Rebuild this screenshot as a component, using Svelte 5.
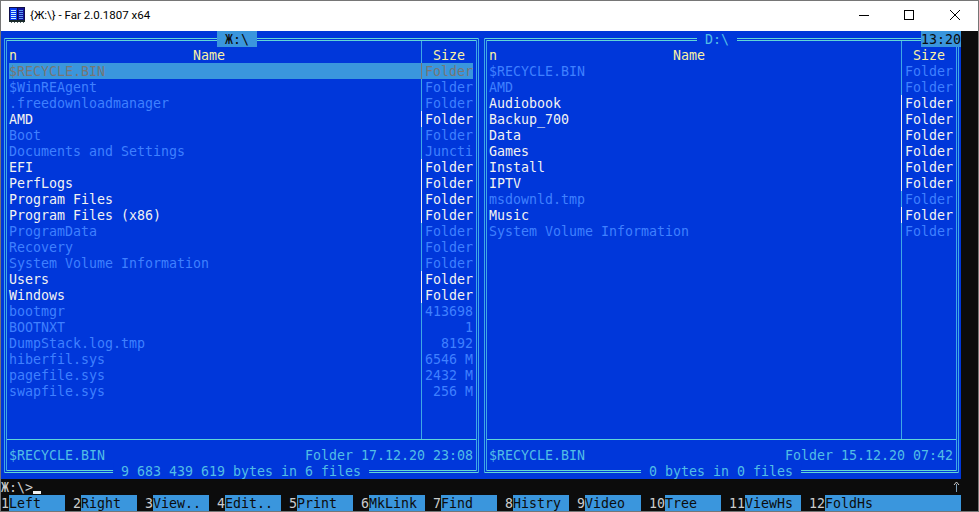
<script>
  const dim = 'dim';
  const white = 'white';

  const leftFiles = [
    { name: '$RECYCLE.BIN', size: 'Folder', kind: 'selected' },
    { name: '$WinREAgent', size: 'Folder', kind: dim },
    { name: '.freedownloadmanager', size: 'Folder', kind: dim },
    { name: 'AMD', size: 'Folder', kind: white },
    { name: 'Boot', size: 'Folder', kind: dim },
    { name: 'Documents and Settings', size: 'Juncti', kind: dim },
    { name: 'EFI', size: 'Folder', kind: white },
    { name: 'PerfLogs', size: 'Folder', kind: white },
    { name: 'Program Files', size: 'Folder', kind: white },
    { name: 'Program Files (x86)', size: 'Folder', kind: white },
    { name: 'ProgramData', size: 'Folder', kind: dim },
    { name: 'Recovery', size: 'Folder', kind: dim },
    { name: 'System Volume Information', size: 'Folder', kind: dim },
    { name: 'Users', size: 'Folder', kind: white },
    { name: 'Windows', size: 'Folder', kind: white },
    { name: 'bootmgr', size: '413698', kind: dim },
    { name: 'BOOTNXT', size: '1', kind: dim, right: true },
    { name: 'DumpStack.log.tmp', size: '8192', kind: dim, right: true },
    { name: 'hiberfil.sys', size: '6546 M', kind: dim },
    { name: 'pagefile.sys', size: '2432 M', kind: dim },
    { name: 'swapfile.sys', size: '256 M', kind: dim, right: true }
  ];

  const rightFiles = [
    { name: '$RECYCLE.BIN', size: 'Folder', kind: dim },
    { name: 'AMD', size: 'Folder', kind: dim },
    { name: 'Audiobook', size: 'Folder', kind: white },
    { name: 'Backup_700', size: 'Folder', kind: white },
    { name: 'Data', size: 'Folder', kind: white },
    { name: 'Games', size: 'Folder', kind: white },
    { name: 'Install', size: 'Folder', kind: white },
    { name: 'IPTV', size: 'Folder', kind: white },
    { name: 'msdownld.tmp', size: 'Folder', kind: dim },
    { name: 'Music', size: 'Folder', kind: white },
    { name: 'System Volume Information', size: 'Folder', kind: dim }
  ];

  const panels = [
    {
      title: ' Ж:\\ ',
      active: true,
      files: leftFiles,
      current: '$RECYCLE.BIN',
      info: 'Folder 17.12.20 23:08',
      status: ' 9 683 439 619 bytes in 6 files '
    },
    {
      title: ' D:\\ ',
      active: false,
      files: rightFiles,
      current: '$RECYCLE.BIN',
      info: 'Folder 15.12.20 07:42',
      status: ' 0 bytes in 0 files '
    }
  ];

  const keys = ['Left', 'Right', 'View..', 'Edit..', 'Print', 'MkLink', 'Find', 'Histry', 'Video', 'Tree', 'ViewHs', 'FoldHs'];
</script>

<div class="window">
  <header class="titlebar">
    <svg class="app-icon" width="16" height="16" viewBox="0 0 16 16">
      <rect x="0" y="0" width="16" height="13" fill="#10104a" />
      <rect x="1" y="1" width="7" height="12" fill="#0a3cf0" />
      <rect x="9" y="1" width="6" height="12" fill="#12129a" />
      <path d="M2 3.5h5M2 5.5h5M2 7.5h5M2 9.5h5M2 11.5h5" stroke="#c8f4ff" stroke-width="1" />
      <path d="M10 3.5h4M10 5.5h4M10 7.5h4M10 9.5h4M10 11.5h4" stroke="#5e9cf0" stroke-width="1" />
      <rect x="0" y="13" width="16" height="2" fill="#1a2a2a" />
      <path d="M2 15.5h1M5 15.5h1M8 15.5h1M11 15.5h1M14 15.5h1" stroke="#5a6a6a" stroke-width="1" />
    </svg>
    <span class="caption">{'{Ж:\\}'} - Far 2.0.1807 x64</span>
    <div class="controls">
      <span class="control">
        <svg width="10" height="10" viewBox="0 0 10 10"><path d="M0 5.5h10" stroke="#000" fill="none" /></svg>
      </span>
      <span class="control">
        <svg width="10" height="10" viewBox="0 0 10 10"><rect x="0.5" y="0.5" width="9" height="9" stroke="#000" fill="none" /></svg>
      </span>
      <span class="control">
        <svg width="10" height="10" viewBox="0 0 10 10"><path d="M0 0l10 10M10 0l-10 10" stroke="#000" fill="none" /></svg>
      </span>
    </div>
  </header>

  <div class="console">
    <div class="terminal">
      <div class="panels">
        {#each panels as panel}
          <section class="panel">
            <div class="frame">
              <div class="list">
                <div class="row head">
                  <span class="name">{'n                      Name'}</span>
                  <span class="size">{' Size'}</span>
                </div>
                {#each panel.files as file}
                  <div class="row {file.kind}">
                    <span class="name">{file.name}</span>
                    <span class="size" class:right={file.right}>{file.size}</span>
                  </div>
                {/each}
              </div>
              <div class="info">
                <span>{panel.current}</span>
                <span>{panel.info}</span>
              </div>
            </div>
            <span class="title" class:active={panel.active}>{panel.title}</span>
            <span class="status">{panel.status}</span>
          </section>
        {/each}
        <span class="clock">13:20</span>
      </div>

      <div class="cmdline">
        <span>Ж:\&gt;</span><span class="cursor"></span>
        <svg class="arrow" width="8" height="16" viewBox="0 0 8 16">
          <path d="M3.5 5v8" stroke="#7f9fb8" fill="none" />
          <path d="M1 6l2.5-3 2.5 3" stroke="#ccc" fill="none" />
        </svg>
      </div>

      <div class="keybar">
        {#each keys as label, i}
          <div class="key" class:last={i === keys.length - 1}>
            <span class="num">{i + 1}</span>
            <span class="label">{label}</span>
          </div>
        {/each}
      </div>
    </div>
    <div class="scrollbar"></div>
  </div>
</div>

<style>
  :global(body) {
    margin: 0;
    background: #fff;
  }

  .window {
    box-sizing: border-box;
    width: 979px;
    height: 512px;
    border: 1px solid #767676;
    display: flex;
    flex-direction: column;
    overflow: hidden;
  }

  .titlebar {
    height: 30px;
    display: flex;
    align-items: center;
    background: #fff;
    flex: none;
  }

  .app-icon {
    margin-left: 8px;
    margin-bottom: 2px;
    flex: none;
  }

  .caption {
    margin-left: 5px;
    margin-bottom: 2px;
    font-family: Roboto, sans-serif;
    font-size: 11.5px;
    color: #000;
    white-space: pre;
  }

  .controls {
    margin-left: auto;
    display: flex;
  }

  .control {
    box-sizing: border-box;
    width: 46px;
    height: 30px;
    padding-bottom: 2px;
    display: flex;
    align-items: center;
    justify-content: center;
  }

  .control:first-child {
    padding-left: 2px;
  }

  .console {
    flex: 1;
    display: flex;
    background: #0c0c0c;
  }

  .terminal {
    width: 960px;
    font-family: "DejaVu Sans Mono", monospace;
    font-size: 13.29px;
    line-height: 18px;
    color: #ccc;
  }

  .terminal span {
    white-space: pre;
    height: 16px;
  }

  .scrollbar {
    flex: 1;
  }

  .panels {
    position: relative;
    display: flex;
  }

  .panel {
    position: relative;
    box-sizing: border-box;
    width: 480px;
    height: 448px;
    padding: 7px 2px 6px 3px;
    background: #0037da;
    color: #52bde6;
  }

  .frame {
    box-sizing: border-box;
    height: 100%;
    border: 3px double #61d6d6;
    border-left-color: #3ea8e6;
    border-right-color: #3ea8e6;
    display: flex;
    flex-direction: column;
  }

  .list {
    height: 398px;
    padding: 6px 3px 0 2px;
    box-sizing: border-box;
    background: linear-gradient(#3ea8e6, #3ea8e6) no-repeat 414px 0 / 1px 100%;
  }

  .row {
    display: flex;
    height: 16px;
  }

  .name {
    width: 412px;
  }

  .size {
    box-sizing: border-box;
    width: 52px;
    padding-left: 3px;
    border-left: 1px solid transparent;
  }

  .size.right {
    text-align: right;
  }

  .head {
    color: #f9f1a5;
  }

  .dim {
    color: #3f80ff;
  }

  .white {
    color: #f2f2f2;
  }

  .white .size {
    border-left-color: #f2f2f2;
  }

  .selected {
    background: #3a96dd;
    color: #767676;
  }

  .selected .size {
    border-left-color: #767676;
  }

  .info {
    flex: 1;
    border-top: 1px solid #61d6d6;
    padding: 7px 3px 0 2px;
    display: flex;
    justify-content: space-between;
  }

  .title {
    position: absolute;
    top: 0;
    left: 216px;
    background: #0037da;
  }

  .title.active {
    background: #3a96dd;
    color: #0c0c0c;
  }

  .status {
    position: absolute;
    left: 50%;
    bottom: 0;
    transform: translateX(-50%);
    background: #0037da;
  }

  .clock {
    position: absolute;
    top: 0;
    right: 0;
    background: #3a96dd;
    color: #0c0c0c;
  }

  .cmdline {
    height: 16px;
    display: flex;
  }

  .terminal .cursor {
    width: 8px;
    height: 3px;
    margin-top: 12px;
    background: #f2f2f2;
  }

  .arrow {
    margin-left: auto;
  }

  .keybar {
    display: flex;
    height: 16px;
  }

  .key {
    display: flex;
    margin-right: 8px;
  }

  .key.last {
    flex: 1;
    margin-right: 0;
  }

  .label {
    width: 56px;
    background: #3a96dd;
    color: #0c0c0c;
  }

  .key.last .label {
    flex: 1;
  }
</style>
